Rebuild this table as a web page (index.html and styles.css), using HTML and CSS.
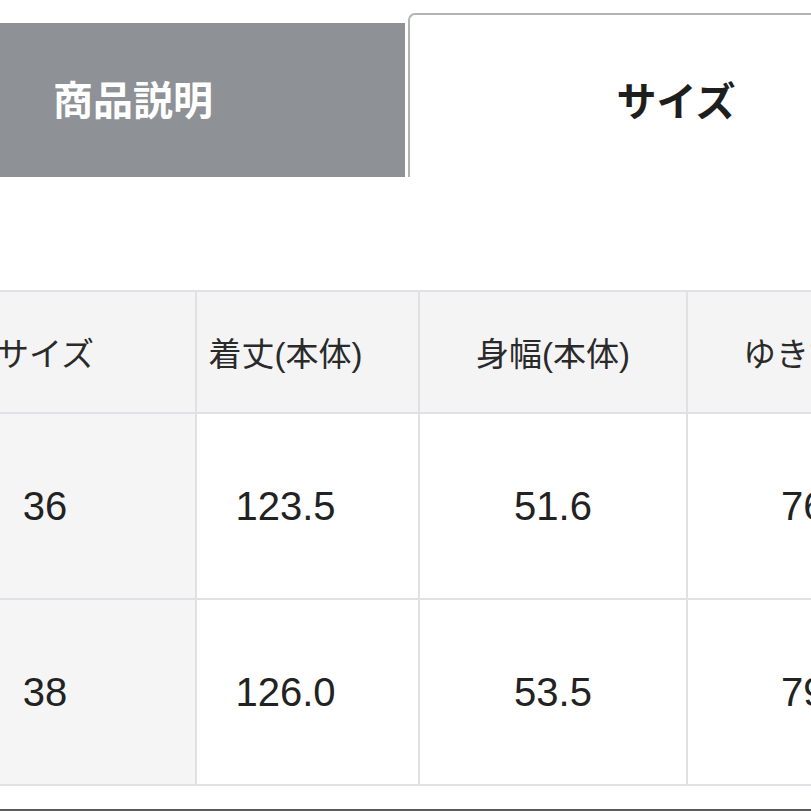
FILE: index.html
```html
<!DOCTYPE html>
<html lang="ja">
<head>
<meta charset="utf-8">
<link rel="stylesheet" href="styles.css">
</head>
<body>
<div class="page">
  <div class="tabs">
    <div class="tab tab-inactive">商品説明</div>
    <div class="tab tab-active">サイズ</div>
  </div>
  <div class="table-wrap">
    <div class="size-table">
      <div class="cell head c1">サイズ</div>
      <div class="cell head c2">着丈(本体)</div>
      <div class="cell head c3">身幅(本体)</div>
      <div class="cell head c4">ゆき丈(本体)</div>

      <div class="cell side c1 num">36</div>
      <div class="cell c2 num">123.5</div>
      <div class="cell c3 num">51.6</div>
      <div class="cell c4 num">76.5</div>

      <div class="cell side c1 num">38</div>
      <div class="cell c2 num">126.0</div>
      <div class="cell c3 num">53.5</div>
      <div class="cell c4 num">79.0</div>
    </div>
  </div>
  <div class="bottom-line"></div>
</div>
</body>
</html>
```
FILE: styles.css
```css
html, body {
  margin: 0;
  padding: 0;
  background: #ffffff;
}
body {
  font-family: "Liberation Sans", "Noto Sans CJK JP", sans-serif;
  overflow: hidden;
}
.page {
  width: 811px;
  height: 811px;
  overflow: hidden;
  display: flex;
  flex-direction: column;
}
.tabs {
  display: flex;
  align-items: flex-end;
  padding-top: 13px;
  height: 164px;
  overflow: hidden;
  flex: none;
}
.tab {
  font-family: "Noto Sans CJK JP", sans-serif;
  font-weight: 700;
  font-size: 40px;
  display: flex;
  align-items: center;
  box-sizing: border-box;
  flex: none;
}
.tab-inactive {
  width: 405px;
  height: 154px;
  background: #8e9196;
  color: #ffffff;
  padding-left: 53px;
  padding-bottom: 5px;
}
.tab-active {
  margin-left: 3px;
  width: 534px;
  height: 164px;
  border-top: 2px solid #b3b3b3;
  border-left: 2px solid #b3b3b3;
  border-top-left-radius: 7px;
  justify-content: center;
  color: #1e1e1e;
  padding-top: 5px;
}
.table-wrap {
  margin-top: 113px;
  overflow: hidden;
  flex: none;
}
.size-table {
  display: grid;
  grid-template-columns: 300px 221px 266px 266px;
  grid-template-rows: 120px 184px 184px;
  gap: 2px;
  background: #dfe1e4;
  border-top: 2px solid #dfe1e4;
  border-bottom: 2px solid #dfe1e4;
  margin-left: -105px;
  width: max-content;
}
.cell {
  background: #ffffff;
  display: flex;
  align-items: center;
  justify-content: center;
  color: #222222;
  white-space: nowrap;
  box-sizing: border-box;
}
.head {
  background: #f4f4f5;
  font-size: 33px;
  color: #2a2a2a;
}
.side {
  background: #f5f5f6;
}
.num {
  font-size: 40px;
}
.c2 {
  padding-right: 44px;
}
.c4 {
  justify-content: flex-start;
  padding-left: 55px;
}
.c4.num {
  padding-left: 93px;
}
.bottom-line {
  margin-top: 23px;
  height: 2px;
  background: #5b5b5b;
  flex: none;
}
```
